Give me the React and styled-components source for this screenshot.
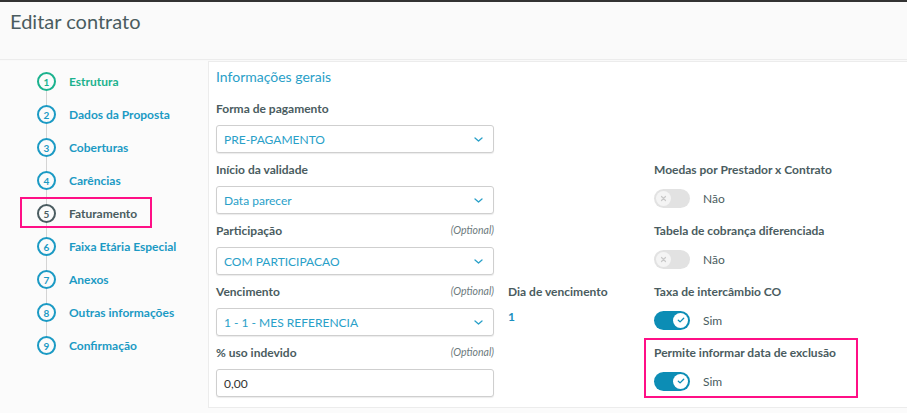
import React from 'react'
import styled, { createGlobalStyle } from 'styled-components'

const Global = createGlobalStyle`
  html, body { margin: 0; padding: 0; }
  body {
    background: #fbfbfb;
    font-family: Lato, "Open Sans", sans-serif;
    color: #4a5c60;
    overflow: hidden;
  }
`

const steps = [
  'Estrutura',
  'Dados da Proposta',
  'Coberturas',
  'Carências',
  'Faturamento',
  'Faixa Etária Especial',
  'Anexos',
  'Outras informações',
  'Confirmação',
]

function Chevron() {
  return (
    <svg width="9" height="5" viewBox="0 0 9 5" fill="none">
      <path d="M1 1l3.5 3 3.5-3" stroke="#29a0c8" strokeWidth="1.3" strokeLinecap="round" strokeLinejoin="round" />
    </svg>
  )
}

function Select({ value }) {
  return (
    <Box>
      <span>{value}</span>
      <Chevron />
    </Box>
  )
}

function Toggle({ on }) {
  return (
    <SwitchRow>
      <Track $on={on}>
        <Thumb $on={on}>
          {on ? (
            <svg width="8" height="8" viewBox="0 0 8 8" fill="none">
              <path d="M1.3 4.2l1.8 1.7L6.7 2.2" stroke="#0c8db5" strokeWidth="1.3" strokeLinecap="round" strokeLinejoin="round" />
            </svg>
          ) : (
            <svg width="7" height="7" viewBox="0 0 7 7" fill="none">
              <path d="M1.5 1.5l4 4M5.5 1.5l-4 4" stroke="#c9c9c9" strokeWidth="1.2" strokeLinecap="round" />
            </svg>
          )}
        </Thumb>
      </Track>
      <span>{on ? 'Sim' : 'Não'}</span>
    </SwitchRow>
  )
}

function Field({ label, optional, col, highlight, children }) {
  return (
    <FieldWrap $col={col} $highlight={highlight}>
      <Label>
        <span>{label}</span>
        {optional && <Optional>(Optional)</Optional>}
      </Label>
      {children}
    </FieldWrap>
  )
}

export default function App() {
  return (
    <Page>
      <Global />
      <Header>Editar contrato</Header>
      <Main>
        <Sidebar>
          <StepList>
            {steps.map((s, i) => (
              <Step key={s} $state={i === 0 ? 'done' : i === 4 ? 'current' : 'todo'}>
                <Circle>{i + 1}</Circle>
                <span>{s}</span>
              </Step>
            ))}
          </StepList>
        </Sidebar>
        <Panel>
          <Title>Informações gerais</Title>
          <FormGrid>
            <Field label="Forma de pagamento" col="1">
              <Select value="PRE-PAGAMENTO" />
            </Field>
            <Field label="Início da validade" col="1">
              <Select value="Data parecer" />
            </Field>
            <Field label="Moedas por Prestador x Contrato" col="3">
              <Toggle />
            </Field>
            <Field label="Participação" optional col="1">
              <Select value="COM PARTICIPACAO" />
            </Field>
            <Field label="Tabela de cobrança diferenciada" col="3">
              <Toggle />
            </Field>
            <Field label="Vencimento" optional col="1">
              <Select value="1 - 1 - MES REFERENCIA" />
            </Field>
            <Field label="Dia de vencimento" col="2">
              <Value>1</Value>
            </Field>
            <Field label="Taxa de intercâmbio CO" col="3">
              <Toggle on />
            </Field>
            <Field label="% uso indevido" optional col="1">
              <Box $plain>
                <span>0,00</span>
              </Box>
            </Field>
            <Field label="Permite informar data de exclusão" col="3" highlight>
              <Toggle on />
            </Field>
          </FormGrid>
        </Panel>
      </Main>
    </Page>
  )
}

const Page = styled.div`
  height: 413px;
  display: flex;
  flex-direction: column;
`

const Header = styled.div`
  height: 51px;
  border-top: 2px solid #333;
  background: #fafafa;
  box-shadow: 0 1px 1px rgba(0, 0, 0, 0.06);
  padding: 6px 10px 0;
  box-sizing: content-box;
  font-size: 20px;
  color: #4a5c60;
  line-height: 26px;
`

const Main = styled.div`
  flex: 1;
  display: flex;
  padding-top: 2px;
  overflow: hidden;
`

const Sidebar = styled.div`
  width: 208px;
  flex-shrink: 0;
  padding: 4px 0 0 37px;
  box-sizing: border-box;
`

const StepList = styled.div`
  position: relative;
  &::before {
    content: '';
    position: absolute;
    left: 9px;
    top: 16px;
    bottom: 16px;
    width: 1px;
    background: #d4d4d4;
  }
`

const stepColor = { done: '#1bb28e', current: '#4a5c60', todo: '#1b9ac4' }

const Circle = styled.div`
  width: 19px;
  height: 19px;
  box-sizing: border-box;
  border-radius: 50%;
  border: 2px solid currentColor;
  background: #fbfbfb;
  display: flex;
  align-items: center;
  justify-content: center;
  font-size: 10px;
  font-weight: 700;
  position: relative;
`

const Step = styled.div`
  height: 33px;
  display: flex;
  align-items: center;
  gap: 13px;
  font-size: 12px;
  font-weight: 700;
  color: ${p => stepColor[p.$state]};
  position: relative;
  ${p => p.$state === 'current' && `
    &::after {
      content: '';
      position: absolute;
      left: -17px;
      top: 0;
      width: 132px;
      height: 31px;
      border: 2px solid #ff0f86;
      box-sizing: border-box;
    }
  `}
`

const Panel = styled.div`
  flex: 1;
  margin-right: -20px;
  margin-bottom: 5px;
  background: #fff;
  border: 1px solid #ececec;
  padding: 6px 8px 0 7px;
`

const Title = styled.div`
  font-size: 14px;
  line-height: 18px;
  color: #29a0c8;
  margin-bottom: 14px;
`

const FormGrid = styled.div`
  display: grid;
  grid-template-columns: 278px 132px 1fr;
  column-gap: 14px;
  row-gap: 8px;
`

const FieldWrap = styled.div`
  grid-column: ${p => p.$col};
  position: relative;
  ${p => p.$highlight && `
    &::before {
      content: '';
      position: absolute;
      left: -10px;
      top: -6px;
      width: 214px;
      height: 60px;
      border: 2px solid #ff0f86;
      box-sizing: border-box;
      pointer-events: none;
    }
  `}
`

const Label = styled.div`
  display: flex;
  justify-content: space-between;
  align-items: center;
  height: 16px;
  margin-bottom: 9px;
  font-size: 12px;
  font-weight: 700;
  color: #4a5c60;
`

const Optional = styled.span`
  font-size: 10.5px;
  font-weight: 400;
  font-style: italic;
  color: #6d7a7d;
`

const Box = styled.div`
  height: 28px;
  box-sizing: border-box;
  border: 1px solid #cfcfcf;
  border-radius: 3px;
  box-shadow: 0 1px 1px rgba(0, 0, 0, 0.08);
  display: flex;
  align-items: center;
  justify-content: space-between;
  padding: 0 10px 0 7px;
  font-size: 12px;
  color: ${p => (p.$plain ? '#333' : '#29a0c8')};
  background: #fff;
`

const Value = styled.div`
  font-size: 12px;
  font-weight: 700;
  line-height: 18px;
  color: #1b8fbf;
`

const SwitchRow = styled.div`
  height: 28px;
  display: flex;
  align-items: center;
  gap: 13px;
  margin-top: -2px;
  font-size: 12px;
  color: #4a5c60;
`

const Track = styled.div`
  width: 36px;
  height: 19px;
  border-radius: 10px;
  background: ${p => (p.$on ? '#0c8db5' : '#e2e2e2')};
  display: flex;
  align-items: center;
  justify-content: ${p => (p.$on ? 'flex-end' : 'flex-start')};
  padding: 0 2px;
  box-sizing: border-box;
`

const Thumb = styled.div`
  width: 15px;
  height: 15px;
  border-radius: 50%;
  background: ${p => (p.$on ? '#fff' : '#f4f4f4')};
  display: flex;
  align-items: center;
  justify-content: center;
`
